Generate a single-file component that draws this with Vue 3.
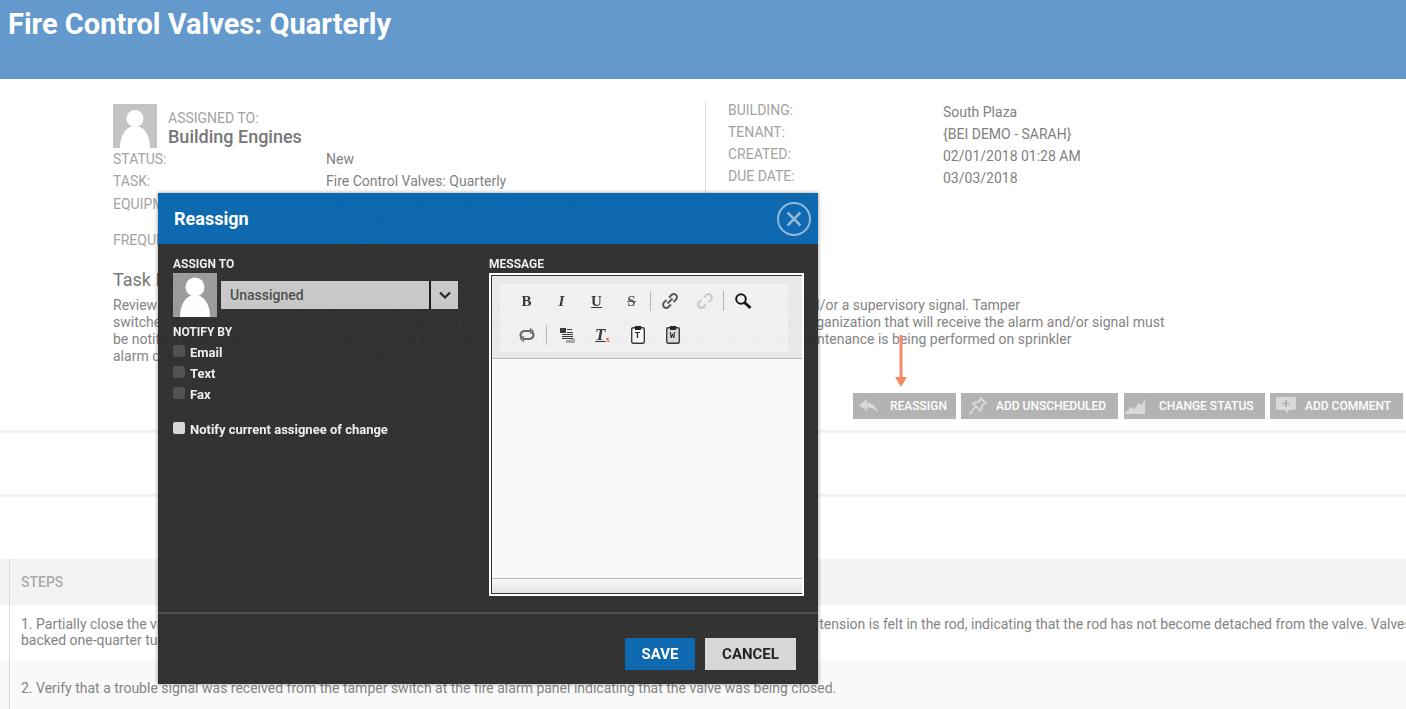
<script setup>
// Work order detail page with the Reassign dialog open on top of it
const leftRows = [
  { label: 'STATUS:', value: ['New'] },
  { label: 'TASK:', value: ['Fire Control Valves: Quarterly'] },
  { label: 'EQUIPMENT:', value: ['FMVS 1 - Fire Main Valve Set:Febco:ZJ987B123-', '23S:Panel Room'] },
  { label: 'FREQUENCY:', value: ['Quarterly'] },
]
const rightRows = [
  ['BUILDING:', 'South Plaza'],
  ['TENANT:', '{BEI DEMO - SARAH}'],
  ['CREATED:', '02/01/2018 01:28 AM'],
  ['DUE DATE:', '03/03/2018'],
]
const notifyBy = ['Email', 'Text', 'Fax']
const noteLines = [
  "Review manufacturer's instructions. The work required by this procedure may cause the activation of an alarm and/or a supervisory signal. Tamper",
  'switches may be provided. The field office manager and the control center, central station, or fire department or organization that will receive the alarm and/or signal must',
  'be notified prior to start and at completion of work. This work should be done when other quarterly scheduled maintenance is being performed on sprinkler',
  'alarm check valves, drypipe, preaction, or deluge valves.',
]
</script>

<template>
  <div class="page">
    <header class="banner">
      <h1>Fire Control Valves: Quarterly</h1>
    </header>

    <section class="details">
      <div class="col-left">
        <div class="assignee">
          <svg class="avatar" viewBox="0 0 44 44">
            <rect width="44" height="44" fill="#c4c4c4" />
            <circle cx="22" cy="14.5" r="8.5" fill="#fff" />
            <path d="M7 44c0-13 6-22 15-22s15 9 15 22z" fill="#fff" />
          </svg>
          <div class="assignee-text">
            <span class="assignee-label">ASSIGNED TO:</span>
            <strong>Building Engines</strong>
          </div>
        </div>
        <div v-for="row in leftRows" :key="row.label" class="info-row">
          <span class="label">{{ row.label }}</span>
          <span class="value">
            <span v-for="line in row.value" :key="line" class="value-line">{{ line }}</span>
          </span>
        </div>
      </div>
      <div class="col-right">
        <div v-for="row in rightRows" :key="row[0]" class="side-row">
          <span class="label">{{ row[0] }}</span>
          <span class="value">{{ row[1] }}</span>
        </div>
      </div>
    </section>

    <section class="note">
      <h2>Task Note:</h2>
      <p v-for="line in noteLines" :key="line">{{ line }}</p>
    </section>

    <div class="actions">
      <button type="button" class="act act-reassign">
        <svg viewBox="0 0 20 16" width="20" height="16"><path d="M8 1 0 7.5 8 13V9.5c5 0 8 1.500 11 5.500-1-6-5-10-11-10.500z" fill="#d9d9d9" /></svg>
        REASSIGN
      </button>
      <button type="button" class="act act-unsched">
        <svg viewBox="0 0 20 20" width="20" height="20" fill="none" stroke="#d9d9d9" stroke-width="1.800"><path d="M12 1.500 18.500 8M13.500 3 9 6.500c-1.500-.5-3 0-4 1l7.500 7.500c1-1 1.500-2.500 1-4L17 6.500M7 11 1.500 18.500" /></svg>
        ADD UNSCHEDULED
      </button>
      <button type="button" class="act act-status">
        <svg viewBox="0 0 22 16" width="22" height="16"><path d="M0 16 7 9l3 2 5-6 3 2 3-7v16z" fill="#d9d9d9" /></svg>
        CHANGE STATUS
      </button>
      <button type="button" class="act act-comment">
        <svg viewBox="0 0 20 18" width="20" height="18"><path d="M2 0h16a2 2 0 0 1 2 2v9a2 2 0 0 1-2 2h-5l-3 4v-4H2a2 2 0 0 1-2-2V2a2 2 0 0 1 2-2z" fill="#d9d9d9" /><path d="M10 3v7M6.500 6.500h7" stroke="#b3b3b3" stroke-width="2" /></svg>
        ADD COMMENT
      </button>
    </div>

    <div class="rule rule-first"></div>
    <div class="rule rule-second"></div>

    <section class="steps">
      <div class="steps-row steps-head"><span>STEPS</span></div>
      <div class="steps-row steps-one">
        <span>1. Partially close the valve being tested while counting the number of turns of the wheel as listed in the task instructions until the tension is felt in the rod, indicating that the rod has not become detached from the valve. Valves shall be backed one-quarter turn from the wide open position to prevent jamming.</span>
      </div>
      <div class="steps-row steps-two">
        <span>2. Verify that a trouble signal was received from the tamper switch at the fire alarm panel indicating that the valve was being closed.</span>
      </div>
    </section>

    <!-- orange pointer drawn on the screenshot -->
    <svg class="pointer" viewBox="0 0 14 54" width="14" height="54">
      <rect x="5.500" y="0" width="3" height="44" fill="#f58a65" />
      <path d="M1 42h12l-6 10z" fill="#f58a65" />
    </svg>

    <div class="modal">
      <div class="modal-head">
        <span class="modal-title">Reassign</span>
        <svg class="modal-close" viewBox="0 0 34 34" width="34" height="34" fill="none" stroke="#8cb6d8">
          <circle cx="17" cy="17" r="16" stroke-width="2" />
          <path d="M10.500 10.500l13 13M23.500 10.500l-13 13" stroke-width="2.600" />
        </svg>
      </div>
      <div class="modal-body">
        <div class="form-left">
          <div class="field-title">ASSIGN TO</div>
          <div class="assign-row">
            <svg class="assign-avatar" viewBox="0 0 44 44">
              <rect width="44" height="44" fill="#999" />
              <circle cx="22" cy="14" r="9.500" fill="#fff" />
              <path d="M7 44c0-13 6-22 15-22s15 9 15 22z" fill="#fff" />
            </svg>
            <div class="select">
              <span class="select-text">Unassigned</span>
              <span class="select-btn">
                <svg viewBox="0 0 12 8" width="12" height="8" fill="none" stroke="#222" stroke-width="2.200"><path d="M1 1.500 6 6.500 11 1.500" /></svg>
              </span>
            </div>
          </div>
          <div class="field-title notify-title">NOTIFY BY</div>
          <div v-for="item in notifyBy" :key="item" class="check-row">
            <span class="box"></span><span>{{ item }}</span>
          </div>
          <div class="check-row check-current">
            <span class="box box-light"></span><span>Notify current assignee of change</span>
          </div>
        </div>
        <div class="form-right">
          <div class="field-title">MESSAGE</div>
          <div class="editor">
            <div class="editor-inner">
              <div class="toolbar">
                <div class="tools">
                  <div class="tool-line">
                    <span class="tool glyph">B</span>
                    <span class="tool glyph italic">I</span>
                    <span class="tool glyph under">U</span>
                    <span class="tool glyph strike">S</span>
                    <span class="sep"></span>
                    <span class="tool">
                      <svg viewBox="0 0 16 16" width="16" height="16" fill="none" stroke="#555" stroke-width="2"><path d="M7 4.500 9.500 2a3 3 0 0 1 4.500 4.500L11.500 9M9 11.500 6.500 14A3 3 0 0 1 2 9.500L4.500 7M5.500 10.500l5-5" /></svg>
                    </span>
                    <span class="tool">
                      <svg viewBox="0 0 16 16" width="16" height="16" fill="none" stroke="#c8c8c8" stroke-width="2"><path d="M7 4.500 9.500 2a3 3 0 0 1 4.500 4.500L11.500 9M9 11.500 6.500 14A3 3 0 0 1 2 9.500L4.500 7" /></svg>
                    </span>
                    <span class="sep"></span>
                    <span class="tool">
                      <svg viewBox="0 0 18 18" width="18" height="18" fill="none" stroke="#111"><circle cx="7" cy="7" r="4.800" stroke-width="2" /><path d="M10.500 10.500 16.500 16" stroke-width="3" /></svg>
                    </span>
                  </div>
                  <div class="tool-line">
                    <span class="tool">
                      <svg viewBox="0 0 18 14" width="18" height="14" fill="none" stroke="#666" stroke-width="2.200"><path d="M4 10C1 7 3 3 7 3h6M14 4c3 3 1 7-3 7H5" /><path d="M12 .5l3 2.500-3 2.500M6 8.500 3 11l3 2.500" stroke-width="1.400" /></svg>
                    </span>
                    <span class="sep sep-tight"></span>
                    <span class="tool">
                      <svg viewBox="0 0 15 15" width="15" height="15"><path d="M0 0h6v5H0zM7 1h5v1H7zM7 4h6v1H7zM2 6h11v1H2zM2 8h11v1H2zM2 10h11v1H2z" fill="#333" /><path d="M11 11h3v-1h1v5H6v-3h5z" fill="#aaa" /></svg>
                    </span>
                    <span class="tool tx"><i>T</i><b>x</b></span>
                    <span class="tool">
                      <svg viewBox="0 0 14 18" width="14" height="18"><rect x=".7" y="1.700" width="12.600" height="15.600" rx="1.500" fill="#fbfbfb" stroke="#333" stroke-width="1.400" /><path d="M4 0h6v4H4z" fill="#222" /></svg>
                      <em class="clip-letter">T</em>
                    </span>
                    <span class="tool">
                      <svg viewBox="0 0 14 18" width="14" height="18"><rect x=".7" y="1.700" width="12.600" height="15.600" rx="1.500" fill="#d8d8d8" stroke="#333" stroke-width="1.400" /><path d="M4 0h6v4H4z" fill="#222" /></svg>
                      <em class="clip-letter">W</em>
                    </span>
                  </div>
                </div>
              </div>
              <div class="editor-area"></div>
              <div class="editor-foot"></div>
            </div>
          </div>
        </div>
      </div>
      <div class="modal-foot">
        <button type="button" class="btn btn-save">SAVE</button>
        <button type="button" class="btn btn-cancel">CANCEL</button>
      </div>
    </div>
  </div>
</template>

<style scoped>
.page {
  position: relative;
  width: 1406px;
  height: 709px;
  overflow: hidden;
  background: #fff;
  font-family: Roboto, "Liberation Sans", sans-serif;
  font-size: 14px;
  color: #848484;
}
.banner {
  height: 79px;
  background: #6399cd;
  padding: 7px 8px 0;
  box-sizing: border-box;
}
h1 {
  margin: 0;
  font-size: 29px;
  line-height: 34px;
  font-weight: 700;
  color: #fff;
}
.details {
  display: flex;
  padding: 21px 0 0 113px;
  height: 170px;
  box-sizing: border-box;
}
.col-left {
  width: 592px;
}
.assignee {
  display: flex;
  align-items: center;
  height: 44px;
  margin: 4px 0 3px;
}
.avatar {
  width: 44px;
  height: 44px;
  margin-right: 11px;
}
.assignee-text {
  display: flex;
  flex-direction: column;
  line-height: 17px;
  padding-top: 5px;
}
.assignee-label {
  color: #a3a3a3;
  font-size: 14px;
}
.assignee-text strong {
  font-size: 18px;
  line-height: 20px;
  font-weight: 500;
  color: #777;
}
.info-row {
  display: flex;
  margin-bottom: 6px;
  line-height: 16px;
}
.label {
  color: #a3a3a3;
}
.info-row .label {
  width: 213px;
}
.value {
  color: #847f7f;
}
.value-line {
  display: block;
  line-height: 14px;
}
.info-row .value {
  padding-top: 1px;
}
.info-row:nth-of-type(n + 4) {
  margin-top: 7px;
}
.col-right {
  border-left: 1px solid #ddd;
  padding-left: 22px;
  height: 170px;
  box-sizing: border-box;
}
.side-row {
  display: flex;
  height: 22px;
  line-height: 20px;
}
.side-row .label {
  width: 215px;
}
.side-row .value {
  padding-top: 2px;
}
.note {
  padding: 0 0 0 113px;
  margin-top: 20px;
}
h2 {
  margin: 0 0 6px;
  font-size: 18px;
  line-height: 22px;
  font-weight: 400;
  color: #777;
}
.note p {
  margin: 0;
  line-height: 17px;
  white-space: nowrap;
}
.actions {
  display: flex;
  justify-content: flex-end;
  gap: 5px;
  padding-right: 3px;
  margin-top: 28px;
}
.act {
  display: flex;
  align-items: center;
  height: 26px;
  border: none;
  background: #b3b3b3;
  color: #fff;
  font-family: inherit;
  font-size: 12px;
  font-weight: 500;
  padding: 0;
  white-space: nowrap;
}
.act-reassign {
  width: 103px;
  gap: 11px;
  padding-left: 6px;
}
.act-unsched {
  width: 157px;
  gap: 8px;
  padding-left: 7px;
}
.act-status {
  width: 141px;
  gap: 13px;
  padding-left: 0;
  margin-left: 1px;
}
.act-comment {
  width: 133px;
  gap: 9px;
  padding-left: 6px;
}
.rule {
  height: 3px;
  background: #f3f3f3;
}
.rule-first {
  margin-top: 11px;
}
.rule-second {
  margin-top: 61px;
}
.steps {
  margin-top: 62px;
  width: 1500px;
}
.steps-row {
  margin-left: 0;
  padding-left: 9px;
  background-clip: padding-box;
}
.steps-row span {
  display: block;
  border-left: 1px solid #d8d8d8;
  padding: 0 0 0 11px;
}
.steps-head {
  height: 46px;
  background: #f3f3f3;
  line-height: 46px;
}
.steps-head span {
  font-weight: 500;
  color: #aaa;
  height: 46px;
}
.steps-one {
  height: 55px;
  background: #fff;
}
.steps-one span {
  height: 55px;
  padding-top: 11px;
  box-sizing: border-box;
  line-height: 16px;
}
.steps-two {
  height: 49px;
  background: #f9f9f9;
}
.steps-two span {
  height: 49px;
  padding-top: 20px;
  box-sizing: border-box;
  line-height: 16px;
}
.pointer {
  position: absolute;
  left: 894px;
  top: 335px;
}
.modal {
  position: absolute;
  left: 158px;
  top: 193px;
  width: 660px;
  height: 491px;
  display: flex;
  flex-direction: column;
  background: #2d2d2d;
  box-shadow: 0 0 4px rgba(0, 0, 0, 0.45);
  opacity: 0.97;
  font-weight: 500;
  color: #eee;
}
.modal-head {
  display: flex;
  align-items: center;
  justify-content: space-between;
  height: 51px;
  padding: 0 7px 0 16px;
  background: #0765ae;
  flex: none;
}
.modal-title {
  font-size: 18px;
  font-weight: 700;
  color: #fff;
}
.modal-body {
  display: flex;
  flex: 1;
  padding: 13px 14px 0 15px;
  min-height: 0;
}
.form-left {
  width: 316px;
}
.field-title {
  font-size: 12px;
  line-height: 15px;
  font-weight: 700;
  color: #eee;
}
.assign-row {
  display: flex;
  align-items: center;
  margin-top: 1px;
}
.assign-avatar {
  width: 44px;
  height: 44px;
  margin-right: 4px;
}
.select {
  display: flex;
  width: 237px;
  height: 28px;
}
.select-text {
  flex: 1;
  background: #c8c8c8;
  color: #4b4b4b;
  font-size: 14px;
  line-height: 28px;
  padding-left: 9px;
  border-right: 2px solid #151515;
}
.select-btn {
  display: flex;
  align-items: center;
  justify-content: center;
  width: 27px;
  margin-left: 0;
  background: #c8c8c8;
  border-left: 0;
}
.notify-title {
  margin-top: 8px;
  margin-bottom: 2px;
}
.check-row {
  display: flex;
  align-items: center;
  height: 21px;
  font-size: 13px;
  font-weight: 700;
  color: #eee;
}
.box {
  width: 12px;
  height: 12px;
  margin-right: 5px;
  border-radius: 2px;
  background: #4d4d4d;
  position: relative;
  top: -2px;
}
.box-light {
  background: #d6d6d6;
}
.check-current {
  margin-top: 14px;
}
.form-right {
  width: 315px;
}
.editor {
  margin-top: 1px;
  width: 315px;
  height: 323px;
  background: #fff;
  padding: 2px;
  box-sizing: border-box;
}
.editor-inner {
  display: flex;
  flex-direction: column;
  height: 100%;
  border: 1px solid #2d2d2d;
  border-right: none;
  box-sizing: border-box;
  margin-right: 0;
}
.toolbar {
  height: 83px;
  background: #e9e9e9;
  border-bottom: 1px solid #b5b5b5;
  padding: 8px 0 0 8px;
  box-sizing: border-box;
  flex: none;
}
.tools {
  width: 288px;
  height: 68px;
  background: #f1f1f1;
  font-weight: 400;
}
.tool-line {
  display: flex;
  align-items: center;
  height: 34px;
  padding-left: 9px;
}
.tool {
  position: relative;
  display: flex;
  align-items: center;
  justify-content: center;
  width: 35px;
  height: 26px;
  color: #333;
}
.glyph {
  font-family: "Liberation Serif", serif;
  font-weight: 700;
  font-size: 15px;
}
.italic {
  font-style: italic;
}
.under {
  text-decoration: underline;
}
.strike {
  text-decoration: line-through;
  color: #555;
}
.sep {
  width: 1px;
  height: 20px;
  background: #b5b5b5;
  margin: 0 1px;
}
.sep-tight {
  margin: 0 3px 0 2px;
}
.tool-line .tool:nth-child(n) {
  flex: none;
}
.tx {
  font-family: "Liberation Serif", serif;
  color: #333;
}
.tx i {
  font-size: 17px;
  font-weight: 700;
  text-decoration: underline;
}
.tx b {
  font-size: 9px;
  color: #f0553c;
  margin-top: 8px;
}
.clip-letter {
  position: absolute;
  left: 0;
  right: 0;
  top: 9px;
  text-align: center;
  font-family: "Liberation Mono", monospace;
  font-style: normal;
  font-size: 9px;
  line-height: 11px;
  font-weight: 700;
  color: #222;
}
.editor-area {
  flex: 1;
  background: #f8f8f8;
}
.editor-foot {
  height: 14px;
  flex: none;
  border-top: 1px solid #b5b5b5;
  background: linear-gradient(#f6f6f6, #e6e6e6);
}
.modal-foot {
  display: flex;
  justify-content: flex-end;
  gap: 10px;
  height: 72px;
  padding: 24px 22px 0 0;
  box-sizing: border-box;
  border-top: 2px solid #4a4a4a;
  margin-bottom: 0;
  flex: none;
}
.btn {
  height: 32px;
  border: none;
  font-family: inherit;
  font-size: 15px;
  font-weight: 700;
  padding: 0;
}
.btn-save {
  width: 70px;
  background: #0765ae;
  color: #fff;
}
.btn-cancel {
  width: 91px;
  background: #d6d6d6;
  color: #1c1c1c;
}
</style>

<style>
html, body {
  margin: 0;
  overflow: hidden;
}
</style>
